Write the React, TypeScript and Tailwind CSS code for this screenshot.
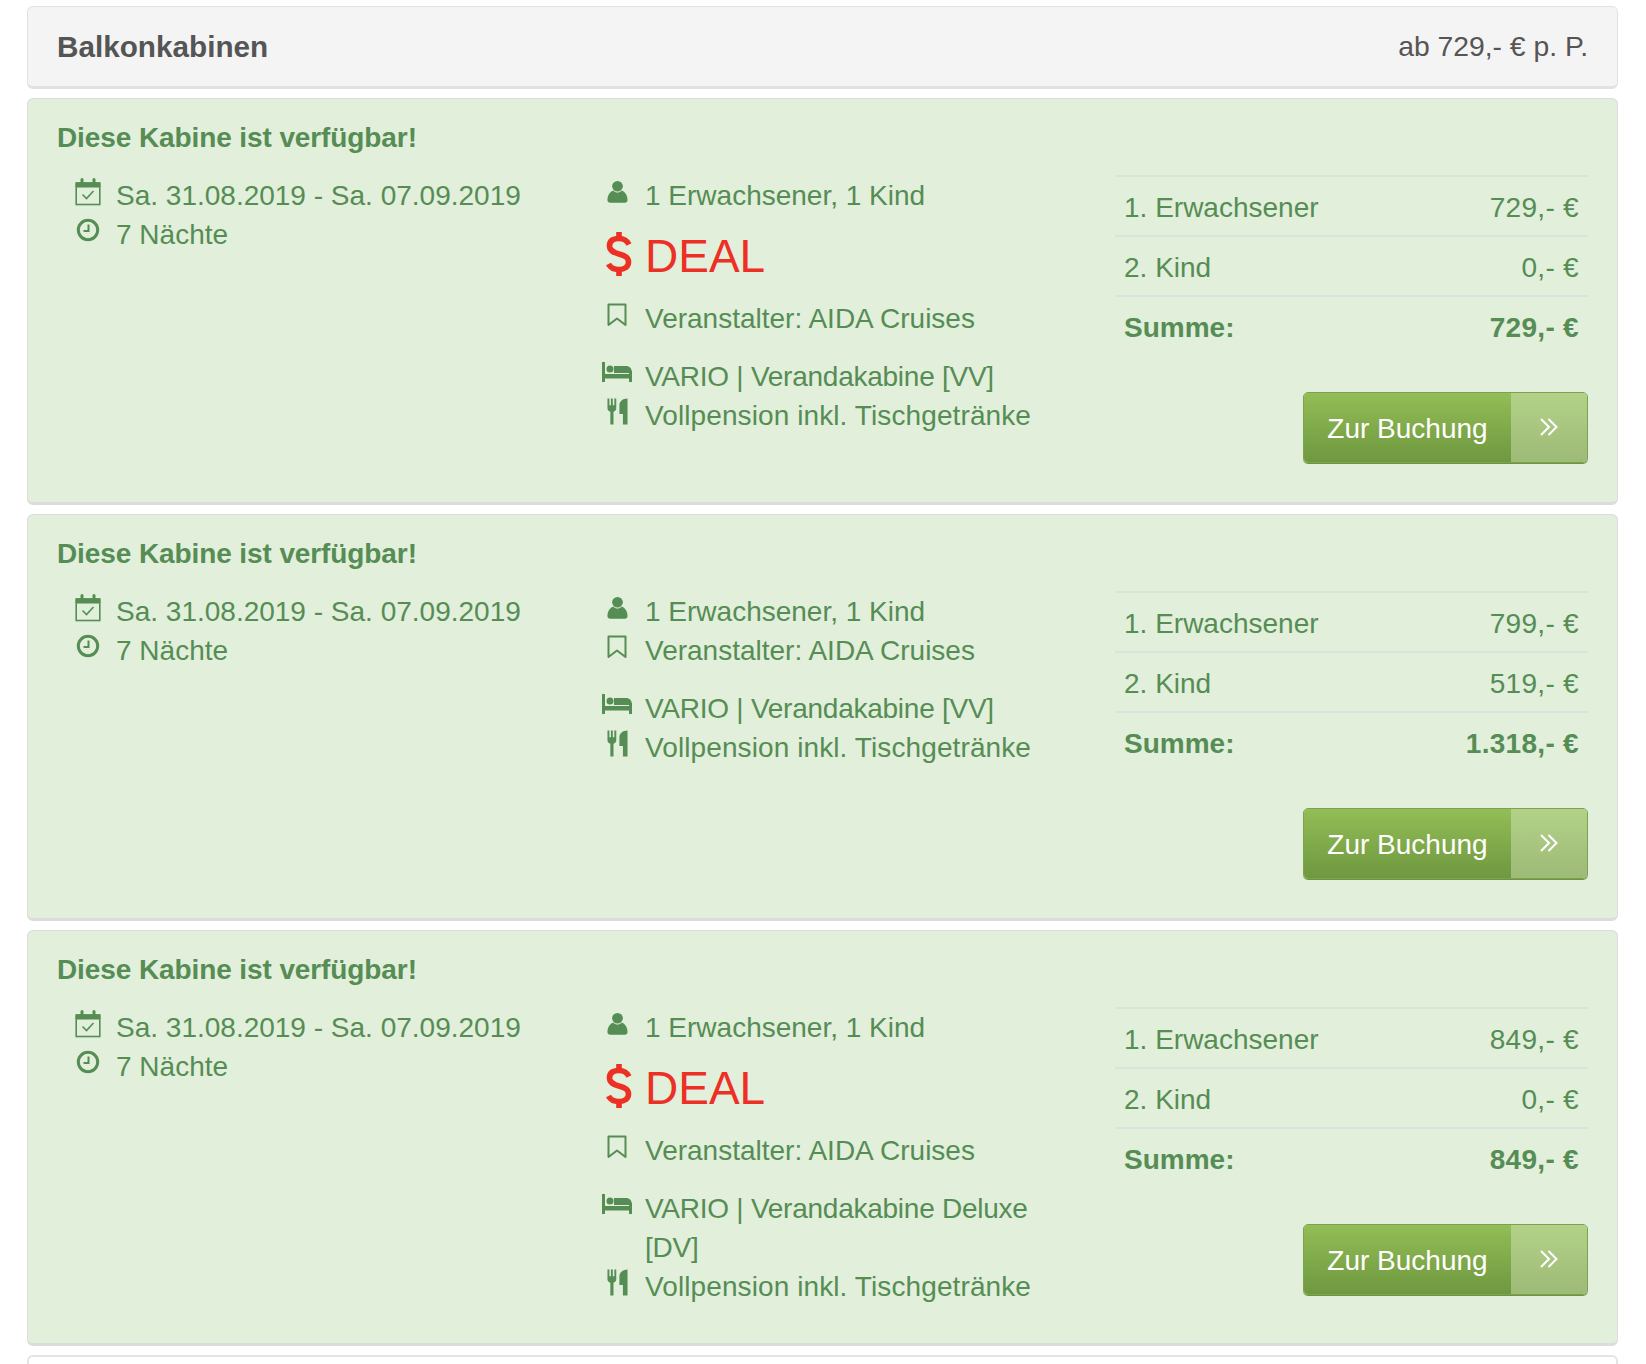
import React from "react";

const Row = ({ icon, children, col2 }: { icon: React.ReactNode; children: React.ReactNode; col2?: boolean }) => (
  <div className="flex items-start">
    <div className={col2 ? "w-[45px] h-[39px] flex items-start justify-center pr-[11px]" : "w-[42px] h-[39px] flex items-start justify-center pr-[15px]"}>{icon}</div>
    <div className="flex-1">{children}</div>
  </div>
);

const CalIcon = () => (
  <svg width="26" height="28" viewBox="0 0 26 28" className="mt-[2px]" fill="none" stroke="currentColor">
    <rect x="1.2" y="5" width="23.6" height="21.5" strokeWidth="1.6" />
    <path d="M1.2 5h23.6v4H1.2z" fill="currentColor" strokeWidth="1" />
    <path d="M7 1.5v4M19 1.5v4" strokeWidth="3" strokeLinecap="round" />
    <path d="M7.500 16.500l4 4 7-7.500" strokeWidth="1.6" />
  </svg>
);
const ClockIcon = () => (
  <svg width="24" height="24" viewBox="0 0 24 24" className="mt-[3px] ml-[1px]" fill="none" stroke="currentColor">
    <circle cx="12" cy="12" r="9.7" strokeWidth="3" />
    <path d="M12.5 6.5v6.5H7.5" strokeWidth="2" />
  </svg>
);
const PersonIcon = () => (
  <svg width="21" height="24" viewBox="0 0 22 24" className="mt-[4px]" fill="currentColor">
    <circle cx="11" cy="6" r="5.6" />
    <path d="M0.5 20.5C0.5 14.5 4 11.500 6.500 10.500 8 12 9.500 12.600 11 12.600s3-.6 4.500-2.100c2.500 1 6 4 6 10 0 1.800-1 2.700-3 2.700H3.500c-2 0-3-.9-3-2.700z" />
  </svg>
);
const BookmarkIcon = () => (
  <svg width="20" height="24" viewBox="0 0 20 24" className="mt-[4px]" fill="none" stroke="currentColor" strokeWidth="2" strokeLinejoin="round">
    <path d="M1.500 1.500h17v20.500L10 15.500 1.500 22z" />
  </svg>
);
const BedIcon = () => (
  <svg width="30" height="20" viewBox="0 0 30 20" className="mt-[5px]" fill="currentColor">
    <rect x="0" y="0" width="3" height="20" />
    <rect x="0" y="12" width="30" height="4.500" />
    <rect x="27" y="9" width="3" height="11" />
    <circle cx="8" cy="7" r="3.500" />
    <path d="M12 4h12c3.500 0 6 2.500 6 7H12z" />
  </svg>
);
const ForkIcon = () => (
  <svg width="21" height="27" viewBox="0 0 22 27" className="mt-[2px]" fill="currentColor">
    <path d="M0.500 0h2v7h1.600V0h2v7h1.600V0h2v10c0 2-1.300 3.200-2.900 3.700V27H3.500V13.700C1.800 13.200.5 12 .5 10z" />
    <path d="M21.500 0v27h-4.800V16H13V7c0-4 3.500-7 8.500-7z" />
  </svg>
);
const DollarIcon = () => (
  <svg width="26" height="46" viewBox="0 0 26 46" fill="none" stroke="#ec3024" strokeWidth="5.6">
    <path d="M23 13.500C21 9.500 17 7.500 13 7.500 7 7.500 3.500 10 3.500 15 3.500 20 8 21.500 13 23 18.500 24.500 22.500 26 22.500 31 22.500 36 18.500 38.500 13 38.500 8 38.500 4.500 37 2.500 33" />
    <path d="M13 1v6.500M13 38.500V45" />
  </svg>
);

const PriceRow = ({ l, r, bold }: { l: string; r: string; bold?: boolean }) => (
  <div className={bold ? "flex justify-between items-center h-[60px] px-[9px] pt-[3px] border-t-2 border-[#dbe4da] font-bold" : "flex justify-between items-center h-[60px] px-[9px] pt-[3px] border-t-2 border-[#dbe4da]"}>
    <span>{l}</span>
    <span className="tracking-[0.3px]">{r}</span>
  </div>
);

const Card = ({ deal, kabine, adult, child, sum }: { deal?: boolean; kabine: string; adult: string; child: string; sum: string }) => (
  <div className="bg-[#e2efdb] border border-[#dcdcdc] border-b-[3px] rounded-[6px] pt-[19px] pb-[37px] px-[29px] text-[#558d55]">
    <div className="font-bold tracking-[-0.1px]">Diese Kabine ist verfügbar!</div>
    <div className="flex mt-[19px]">
      <div className="w-[543px] pl-[17px]">
        <Row icon={<CalIcon />}>Sa. 31.08.2019 - Sa. 07.09.2019</Row>
        <Row icon={<ClockIcon />}>7 Nächte</Row>
      </div>
      <div className="w-[470px] mr-[45px]">
        <Row col2 icon={<PersonIcon />}>1 Erwachsener, 1 Kind</Row>
        {deal && (
          <div className="flex items-center h-[84px] text-[#ec3024] text-[46px] leading-none">
            <span className="w-[45px] pl-[6px] mt-[-6px]"><DollarIcon /></span>
            <span className="mt-[-2px]">DEAL</span>
          </div>
        )}
        <Row col2 icon={<BookmarkIcon />}>Veranstalter: AIDA Cruises</Row>
        <div className="mt-[19px]">
          <Row col2 icon={<BedIcon />}><span className="tracking-[-0.25px]">{kabine}</span></Row>
          <Row col2 icon={<ForkIcon />}><span className="tracking-[0.1px]">Vollpension inkl. Tischgetränke</span></Row>
        </div>
      </div>
      <div className="flex-1 mt-[-1px]">
        <PriceRow l="1. Erwachsener" r={adult} />
        <PriceRow l="2. Kind" r={child} />
        <PriceRow l="Summe:" r={sum} bold />
        <div className="flex justify-end mt-[37px] mb-[2px]">
          <div className="flex h-[71px] w-[285px] rounded-[5px] border border-[#7ba250] overflow-hidden text-white shadow-[0_1px_0_#6e9640]">
            <div className="flex-1 flex items-center justify-center pt-[1px] bg-gradient-to-b from-[#93bd56] to-[#6f9840]">Zur Buchung</div>
            <div className="w-[76px] flex items-center justify-center bg-gradient-to-b from-[#b3d288] to-[#9dba77]">
              <svg width="20" height="20" viewBox="0 0 20 20" className="mt-[-1px]" fill="none" stroke="#ffffff" strokeWidth="2">
                <path d="M2 2l8 8-8 8M9.500 2l8 8-8 8" />
              </svg>
            </div>
          </div>
        </div>
      </div>
    </div>
  </div>
);

export default function App() {
  return (
    <div className="h-[1364px] overflow-hidden bg-white pt-[6px] pl-[27px] pr-[28px] flex flex-col gap-[9px] text-[28px] leading-[39px] font-['Liberation_Sans',Arial,sans-serif]">
      <div className="h-[83px] shrink-0 flex items-center justify-between px-[29px] bg-[#f4f4f4] border border-[#e2e2e2] border-b-[3px] rounded-[6px] text-[#555555]">
        <span className="font-bold text-[29.7px]">Balkonkabinen</span>
        <span className="text-[28.3px]">ab 729,- € p. P.</span>
      </div>
      <Card deal kabine="VARIO | Verandakabine [VV]" adult="729,- €" child="0,- €" sum="729,- €" />
      <Card kabine="VARIO | Verandakabine [VV]" adult="799,- €" child="519,- €" sum="1.318,- €" />
      <Card deal kabine="VARIO | Verandakabine Deluxe [DV]" adult="849,- €" child="0,- €" sum="849,- €" />
      <div className="h-[60px] shrink-0 bg-white border-2 border-[#e4e4e4] rounded-[6px]" />
    </div>
  );
}
